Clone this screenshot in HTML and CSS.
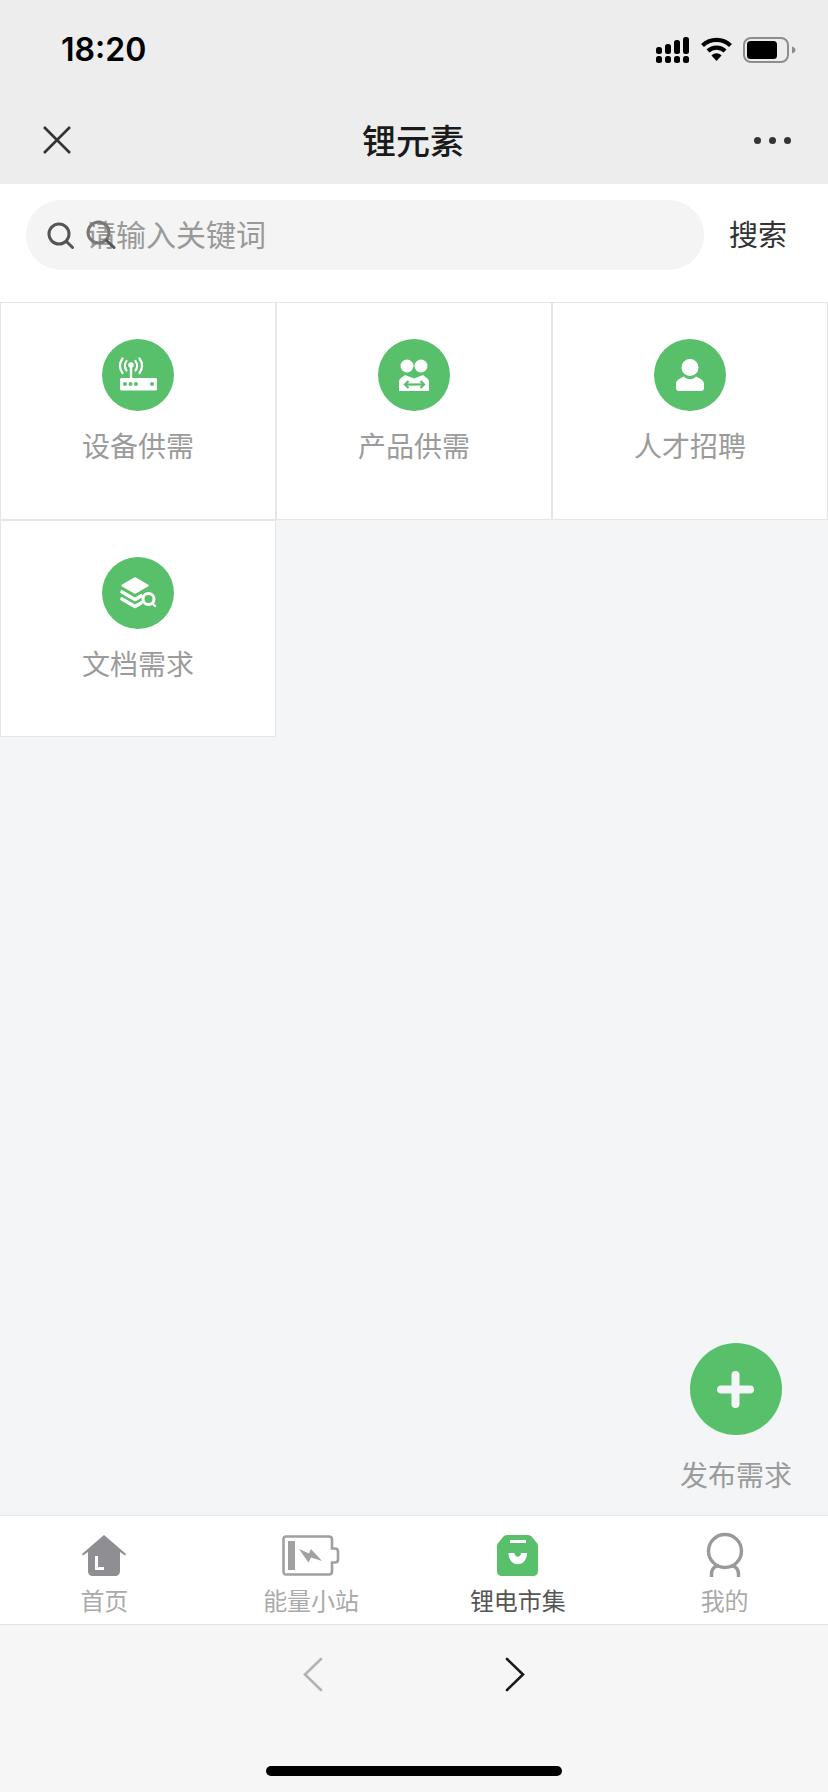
FILE: index.html
```html
<!DOCTYPE html>
<html lang="zh-CN">
<head>
    <meta charset="UTF-8">
    <meta name="viewport" content="width=device-width, initial-scale=1.0">
    <title>锂元素</title>
    <link rel="stylesheet" href="styles.css">
</head>
<body>
    <div class="page">
        <!-- status bar and title bar -->
        <header class="top">
            <div class="status">
                <span class="time">18:20</span>
                <div class="status-icons">
                    <svg width="33" height="26" viewBox="0 0 33 26">
                        <g fill="#000">
                            <rect x="0" y="10" width="6" height="7" rx="2.5"/>
                            <rect x="9" y="7" width="6" height="10" rx="2.5"/>
                            <rect x="18" y="3" width="6" height="14" rx="2.5"/>
                            <rect x="27" y="0" width="6" height="17" rx="2.5"/>
                            <rect x="0" y="19" width="6" height="7" rx="2.5"/>
                            <rect x="9" y="19" width="6" height="7" rx="2.5"/>
                            <rect x="18" y="19" width="6" height="7" rx="2.5"/>
                            <rect x="27" y="19" width="6" height="7" rx="2.5"/>
                        </g>
                    </svg>
                    <svg width="31" height="24" viewBox="0 0 31 24">
                        <g fill="none" stroke="#000" stroke-width="4.2">
                            <path d="M1.5 8.5C9.5 1 21.500 1 29.500 8.500"/>
                            <path d="M7 14C11.800 9.500 19.200 9.500 24 14"/>
                        </g>
                        <path d="M10.500 18.500C13.500 15.600 17.500 15.600 20.500 18.500L15.500 24Z" fill="#000"/>
                    </svg>
                    <svg width="53" height="26" viewBox="0 0 53 26">
                        <rect x="1" y="1" width="44" height="24" rx="7" fill="none" stroke="#8d8d8d" stroke-width="2"/>
                        <rect x="4" y="4" width="30" height="18" rx="3.500" fill="#000"/>
                        <path d="M49 9.500C51.500 10.500 52.500 11.500 52.500 13C52.500 14.500 51.500 15.500 49 16.500Z" fill="#8d8d8d"/>
                    </svg>
                </div>
            </div>
            <div class="navbar">
                <svg class="nav-close" width="30" height="28" viewBox="0 0 30 28">
                    <path d="M2 1L28 27M28 1L2 27" fill="none" stroke="#333" stroke-width="2.600"/>
                </svg>
                <h1 class="nav-title">锂元素</h1>
                <div class="nav-more"><i></i><i></i><i></i></div>
            </div>
        </header>

        <div class="search-row">
            <div class="search-box">
                <svg width="27" height="27" viewBox="0 0 27 27">
                    <circle cx="12" cy="12" r="10" fill="none" stroke="#555" stroke-width="3"/>
                    <path d="M19.500 19.500L25.500 25.500" stroke="#555" stroke-width="3" stroke-linecap="round"/>
                </svg>
                <span class="placeholder">请输入关键词</span>
                <!-- second icon sits on top of the placeholder -->
                <svg class="search-ghost" width="30" height="29" viewBox="0 0 30 29">
                    <circle cx="12.500" cy="12.500" r="10.500" fill="none" stroke="#777" stroke-width="3"/>
                    <path d="M20.500 20.500L28 27.500" stroke="#555" stroke-width="3" stroke-linecap="round"/>
                </svg>
            </div>
            <span class="search-btn">搜索</span>
        </div>

        <main class="main">
            <div class="grid">
                <div class="cell">
                    <svg class="cell-icon" width="72" height="72" viewBox="0 0 72 72">
                        <circle cx="36" cy="36" r="36" fill="#58bf6b"/>
                        <g fill="none" stroke="#fff" stroke-width="2.200" stroke-linecap="round">
                            <path d="M29 27V39" stroke-width="2.400"/>
                            <path d="M24.500 31.500C22.500 28.500 22.500 25 24.500 22"/>
                            <path d="M33.500 31.500C35.500 28.500 35.500 25 33.500 22"/>
                            <path d="M20.500 34C17 29 17 24.500 20.500 19.500"/>
                            <path d="M37.500 34C41 29 41 24.500 37.500 19.500"/>
                        </g>
                        <circle cx="29" cy="26" r="2.800" fill="#fff"/>
                        <rect x="18" y="39" width="37" height="12.500" rx="1.500" fill="#fff"/>
                        <g fill="#58bf6b">
                            <circle cx="23" cy="45" r="2"/>
                            <circle cx="28.500" cy="45" r="2"/>
                            <circle cx="34" cy="45" r="2"/>
                            <circle cx="50" cy="45" r="2"/>
                        </g>
                    </svg>
                    <span class="cell-label">设备供需</span>
                </div>
                <div class="cell">
                    <svg class="cell-icon" width="72" height="72" viewBox="0 0 72 72">
                        <circle cx="36" cy="36" r="36" fill="#58bf6b"/>
                        <circle cx="29" cy="27" r="6.500" fill="#fff"/>
                        <circle cx="43" cy="27" r="6.500" fill="#fff"/>
                        <path d="M21 52V43C21 39.500 24 38.500 27 36L36 39.500L45 36C48 38.500 51 39.500 51 43V52Z" fill="#fff"/>
                        <g fill="none" stroke="#58bf6b" stroke-width="2.200">
                            <path d="M27 45.500H46"/>
                            <path d="M30.500 42L27 45.500L30.500 49"/>
                            <path d="M42.500 42L46 45.500L42.500 49"/>
                        </g>
                    </svg>
                    <span class="cell-label">产品供需</span>
                </div>
                <div class="cell">
                    <svg class="cell-icon" width="72" height="72" viewBox="0 0 72 72">
                        <circle cx="36" cy="36" r="36" fill="#58bf6b"/>
                        <circle cx="36" cy="28.500" r="8.500" fill="#fff"/>
                        <path d="M22 49V45C22 41 26 39.500 30 37.500C33 41 39 41 42 37.500C46 39.500 50 41 50 45V49C50 51 49 52 47 52H25C23 52 22 51 22 49Z" fill="#fff"/>
                    </svg>
                    <span class="cell-label">人才招聘</span>
                </div>
                <div class="cell">
                    <svg class="cell-icon" width="72" height="72" viewBox="0 0 72 72">
                        <circle cx="36" cy="36" r="36" fill="#58bf6b"/>
                        <path d="M33 21L46 28.500L33 36L20 28.500Z" fill="#fff" stroke="#fff" stroke-width="1.500" stroke-linejoin="round"/>
                        <path d="M20 35L33 42.500L39 39" fill="none" stroke="#fff" stroke-width="3.600" stroke-linecap="round" stroke-linejoin="round"/>
                        <path d="M20 42L33 49.500L39 46" fill="none" stroke="#fff" stroke-width="3.600" stroke-linecap="round" stroke-linejoin="round"/>
                        <circle cx="46.500" cy="42" r="5.500" fill="#58bf6b" stroke="#fff" stroke-width="3"/>
                        <path d="M50.500 46.500L53 49" stroke="#fff" stroke-width="2.400" stroke-linecap="round"/>
                    </svg>
                    <span class="cell-label">文档需求</span>
                </div>
            </div>

            <!-- floating publish button -->
            <div class="fab">
                <div class="fab-circle">
                    <svg width="37" height="37" viewBox="0 0 37 37">
                        <path d="M18.500 4V33M4 18.500H33" stroke="#f3f5f7" stroke-width="8" stroke-linecap="round"/>
                    </svg>
                </div>
                <span class="fab-label">发布需求</span>
            </div>
        </main>

        <nav class="tabbar">
            <div class="tab">
                <svg class="tab-icon" width="44" height="41" viewBox="0 0 44 41">
                    <path d="M22 0L44 19L43 20.500L38 17V36C38 39 36 41 33 41H11C8 41 6 39 6 36V17L1 20.500L0 19Z" fill="#8e8e93"/>
                    <path d="M14.500 21V33.500H22" fill="none" stroke="#fff" stroke-width="3"/>
                </svg>
                <span class="tab-label">首页</span>
            </div>
            <div class="tab">
                <svg class="tab-icon" width="58" height="41" viewBox="0 0 58 41">
                    <path d="M4 1.500H47C49 1.500 50 2.500 50 4.500V13.500H53C55 13.500 56 14.500 56 16.500V24.500C56 26.500 55 27.500 53 27.500H50V36.500C50 38.500 49 39.500 47 39.500H4C2.500 39.500 1.500 38.500 1.500 36.500V4C1.500 2.500 2.500 1.500 4 1.500Z" fill="none" stroke="#a0a0a0" stroke-width="2.600"/>
                    <rect x="6" y="6" width="7" height="29" fill="#a0a0a0"/>
                    <path d="M17 14L27 18.500L29 14L40 26L29 22.500L26.500 27.500Z" fill="#a0a0a0"/>
                </svg>
                <span class="tab-label">能量小站</span>
            </div>
            <div class="tab tab-active">
                <svg class="tab-icon" width="41" height="41" viewBox="0 0 41 41">
                    <path d="M10 0H31C33 0 34 1 35 2L39.500 7.500C40.500 8.500 41 10 41 11.500V36C41 39 39 41 36 41H5C2 41 0 39 0 36V11.500C0 10 .5 8.500 1.500 7.500L6 2C7 1 8 0 10 0Z" fill="#58bf6b"/>
                    <path d="M13 6.500H29" stroke="#fff" stroke-width="3"/>
                    <path d="M11.500 18H17.500C17.500 23 24 23 24 18H30C30 33 11.500 33 11.500 18Z" fill="#fff"/>
                </svg>
                <span class="tab-label">锂电市集</span>
            </div>
            <div class="tab">
                <svg class="tab-icon" width="38" height="45" viewBox="0 0 38 45">
                    <circle cx="19" cy="19" r="16.500" fill="none" stroke="#999" stroke-width="3.400"/>
                    <path d="M5.500 45V42C5.500 36 10 33.500 13 33.500M32.500 45V42C32.500 36 28 33.500 25 33.500" fill="none" stroke="#999" stroke-width="3.400"/>
                </svg>
                <span class="tab-label">我的</span>
            </div>
        </nav>

        <div class="browser-bar">
            <div class="arrows">
                <svg width="20" height="35" viewBox="0 0 20 35">
                    <path d="M18 2L2 17.500L18 33" fill="none" stroke="#b3b3b3" stroke-width="2.600" stroke-linecap="round"/>
                </svg>
                <svg width="20" height="35" viewBox="0 0 20 35">
                    <path d="M2 2L18 17.500L2 33" fill="none" stroke="#1a1a1a" stroke-width="2.600" stroke-linecap="round"/>
                </svg>
            </div>
            <div class="home-bar"></div>
        </div>
    </div>
</body>
</html>
```

FILE: styles.css
```css
* {
    box-sizing: border-box;
}

body {
    margin: 0;
    font-family: "Noto Sans CJK SC", "Noto Sans", sans-serif;
    background-color: #f3f5f7;
}

svg {
    display: block;
    flex-shrink: 0;
}

.page {
    width: 828px;
    height: 1792px;
    display: flex;
    flex-direction: column;
    overflow: hidden;
}

.top {
    height: 184px;
    background-color: #ededed;
}

.status {
    height: 96px;
    padding: 30px 32px 0 61px;
    display: flex;
    justify-content: space-between;
    align-items: flex-start;
}

.time {
    font-family: Inter, "Liberation Sans", sans-serif;
    font-size: 32px;
    font-weight: 600;
    line-height: 40px;
    color: #000;
}

.status-icons {
    display: flex;
    gap: 12px;
    padding-top: 7px;
}

.status-icons svg:nth-child(2) {
    margin-right: -1px;
}

.navbar {
    height: 88px;
    padding: 0 37px 0 42px;
    display: flex;
    justify-content: space-between;
    align-items: center;
}

.nav-close {
    margin-top: -1px;
}

.nav-title {
    margin: 0;
    font-size: 34px;
    font-weight: 500;
    line-height: 44px;
    color: #1a1a1a;
}

.nav-more {
    display: flex;
    gap: 8px;
}

.nav-more i {
    width: 7px;
    height: 7px;
    border-radius: 50%;
    background-color: #333;
}

.search-row {
    height: 118px;
    padding: 16px 0 0 26px;
    background-color: #fff;
    display: flex;
    align-items: flex-start;
}

.search-box {
    position: relative;
    width: 678px;
    height: 70px;
    padding-left: 21px;
    border-radius: 35px;
    background-color: #f4f4f4;
    display: flex;
    align-items: center;
    gap: 12px;
}

.placeholder {
    margin-top: -4px;
    font-size: 30px;
    line-height: 40px;
    color: #999;
}

.search-ghost {
    position: absolute;
    left: 60px;
    top: 20px;
}

.search-btn {
    margin-left: 25px;
    font-size: 29px;
    line-height: 66px;
    color: #333;
}

.main {
    position: relative;
    flex: 1;
    background-color: #f3f5f7;
}

.grid {
    display: grid;
    grid-template-columns: repeat(3, 276px);
    grid-auto-rows: 217.5px;
}

.cell {
    padding-top: 36px;
    border: 1px solid #e6e6e6;
    background-color: #fff;
    display: flex;
    flex-direction: column;
    align-items: center;
}

.cell-label {
    margin-top: 14px;
    font-size: 28px;
    line-height: 40px;
    color: #9b9b9b;
}

.fab {
    position: absolute;
    right: 36px;
    bottom: 21px;
    display: flex;
    flex-direction: column;
    align-items: center;
}

.fab-circle {
    width: 92px;
    height: 92px;
    border-radius: 50%;
    background-color: #58bf6b;
    display: flex;
    justify-content: center;
    align-items: center;
}

.fab-label {
    margin-top: 19px;
    font-size: 28px;
    line-height: 40px;
    color: #9b9b9b;
}

.tabbar {
    height: 110px;
    padding-left: 1px;
    border-top: 1px solid #e8e8e8;
    border-bottom: 1px solid #e2e2e2;
    background-color: #fff;
    box-shadow: 0 -3px 5px rgba(0, 0, 0, 0.03);
    display: flex;
}

.tab {
    flex: 1;
    position: relative;
    padding-top: 19px;
    display: flex;
    flex-direction: column;
    align-items: center;
}

.tab-icon {
    height: 41px;
}

.tab:last-child .tab-icon {
    height: 45px;
    margin-top: -3px;
    margin-bottom: -1px;
}

.tab-label {
    margin-top: 7px;
    font-size: 24px;
    line-height: 34px;
    color: #aaa;
}

.tab-active .tab-label {
    color: #555;
}

.browser-bar {
    height: 167px;
    background-color: #f6f6f6;
    display: flex;
    flex-direction: column;
    align-items: center;
}

.arrows {
    width: 222px;
    margin-top: 32px;
    display: flex;
    justify-content: space-between;
}

.home-bar {
    width: 296px;
    height: 10px;
    margin-top: 74px;
    border-radius: 5px;
    background-color: #000;
}
```
